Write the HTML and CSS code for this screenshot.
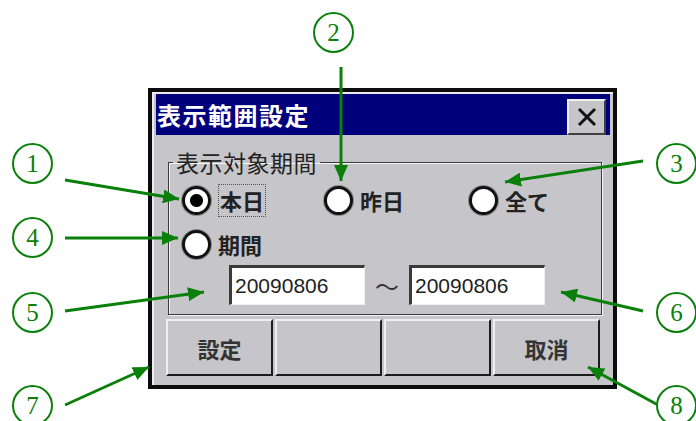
FILE: index.html
```html
<!DOCTYPE html>
<html lang="ja">
<head>
    <meta charset="UTF-8">
    <title>表示範囲設定</title>
    <link rel="stylesheet" href="styles.css">
</head>
<body>
    <div class="canvas">
        <div class="dialog">
            <div class="titlebar">
                <span class="title">表示範囲設定</span>
                <button class="close" aria-label="閉じる">
                    <svg width="20" height="20" viewBox="0 0 20 20"><path d="M2 2 L18 18 M18 2 L2 18" stroke="#111" stroke-width="3"/></svg>
                </button>
            </div>
            <div class="body">
                <fieldset class="group">
                    <legend>表示対象期間</legend>
                    <div class="row">
                        <label class="opt w1"><input type="radio" name="kikan" checked><span class="focus">本日</span></label>
                        <label class="opt w2"><input type="radio" name="kikan"><span>昨日</span></label>
                        <label class="opt"><input type="radio" name="kikan"><span>全て</span></label>
                    </div>
                    <div class="row row2">
                        <label class="opt"><input type="radio" name="kikan"><span>期間</span></label>
                    </div>
                    <div class="range">
                        <input type="text" value="20090806">
                        <span class="tilde">～</span>
                        <input type="text" value="20090806">
                    </div>
                </fieldset>
                <div class="buttons">
                    <button>設定</button>
                    <button></button>
                    <button></button>
                    <button>取消</button>
                </div>
            </div>
        </div>

        <svg class="arrows" width="696" height="421" viewBox="0 0 696 421">
            <defs>
                <marker id="head" markerWidth="16" markerHeight="14" refX="16" refY="7" orient="auto" markerUnits="userSpaceOnUse">
                    <path d="M0 0 L16 7 L0 14 Z" fill="#0a800a"/>
                </marker>
            </defs>
            <line x1="65" y1="180" x2="179" y2="199" marker-end="url(#head)"/>
            <line x1="341" y1="67" x2="341" y2="181" marker-end="url(#head)"/>
            <line x1="643" y1="161" x2="505" y2="182" marker-end="url(#head)"/>
            <line x1="65" y1="238" x2="178" y2="238" marker-end="url(#head)"/>
            <line x1="65" y1="311" x2="204" y2="292" marker-end="url(#head)"/>
            <line x1="643" y1="311" x2="561" y2="292" marker-end="url(#head)"/>
            <line x1="65" y1="405" x2="149" y2="367" marker-end="url(#head)"/>
            <line x1="658" y1="405" x2="588" y2="367" marker-end="url(#head)"/>
        </svg>

        <div class="callout c1">1</div>
        <div class="callout c2">2</div>
        <div class="callout c3">3</div>
        <div class="callout c4">4</div>
        <div class="callout c5">5</div>
        <div class="callout c6">6</div>
        <div class="callout c7">7</div>
        <div class="callout c8">8</div>
    </div>
</body>
</html>
```

FILE: styles.css
```css
body {
    margin: 0;
    padding: 0;
    background: #fff;
    font-family: "Noto Sans CJK JP", sans-serif;
}
.canvas {
    position: relative;
    width: 696px;
    height: 421px;
    overflow: hidden;
    padding-top: 88px;
    box-sizing: border-box;
}

/* dialog */
.dialog {
    margin-left: 148px;
    width: 469px;
    height: 301px;
    box-sizing: border-box;
    border: 4px solid #0c0c0c;
    background: #c6c5ca;
    padding: 2px 3px 3px 4px;
    box-shadow: inset 2px 2px 0 #ececec;
    display: flex;
    flex-direction: column;
}
.titlebar {
    height: 41px;
    background: #00007c;
    display: flex;
    align-items: center;
    justify-content: space-between;
    padding: 0 4px 0 1px;
}
.title {
    color: #fff;
    font-size: 24px;
    font-weight: bold;
    letter-spacing: 1.5px;
    line-height: 1;
}
.close {
    width: 39px;
    height: 36px;
    margin-top: 5px;
    padding: 0;
    background: #c6c5ca;
    border: 2px solid;
    border-color: #f0f0f0 #404040 #404040 #f0f0f0;
    display: flex;
    align-items: center;
    justify-content: center;
}

.body {
    display: flex;
    flex-direction: column;
}
.group {
    margin: 14px 8px 0 12px;
    padding: 10px 0 9px 0;
    border: 1px solid #3a3a3a;
    box-shadow: inset 1px 1px 0 #f4f4f4, 1px 1px 0 #f4f4f4;
    min-width: 0;
}
.group legend {
    margin-left: 4px;
    padding: 0 3px;
    font-size: 23px;
    line-height: 26px;
    letter-spacing: 0.5px;
    color: #222;
}
.row {
    display: flex;
    align-items: center;
    height: 30px;
    padding-left: 13px;
}
.row2 {
    margin-top: 14px;
}
.opt {
    display: flex;
    align-items: center;
    gap: 7px;
    font-size: 22px;
    font-weight: bold;
    color: #222;
}
.w1 { width: 142px; }
.w2 { width: 145px; }
.opt input {
    appearance: none;
    width: 29px;
    height: 29px;
    margin: 0;
    box-sizing: border-box;
    border: 3px solid #111;
    border-radius: 50%;
    background: #fff;
    box-shadow: 0 0 0 1px #8a8a8a;
}
.opt input:checked {
    background: radial-gradient(circle, #000 0 6px, #fff 7px);
}
.focus {
    border: 1px dotted #555;
    padding: 0 1px;
    line-height: 31px;
}

.range {
    display: flex;
    align-items: center;
    margin-top: 6px;
    padding-left: 60px;
}
.range input {
    width: 136px;
    height: 40px;
    box-sizing: border-box;
    margin: 0;
    padding: 0 0 0 3px;
    border: 2px solid;
    border-width: 3px 1px 1px 3px;
    border-color: #3a3a3a #efefef #efefef #3a3a3a;
    background: #fff;
    font-family: "Liberation Sans", Arial, sans-serif;
    font-size: 21px;
    color: #222;
}
.tilde {
    width: 44px;
    text-align: center;
    font-size: 24px;
    color: #333;
}

.buttons {
    display: flex;
    gap: 2px;
    margin: 4px 0 0 10px;
}
.buttons button {
    width: 107px;
    height: 57px;
    box-sizing: border-box;
    padding: 0;
    background: #c6c5ca;
    border: 2px solid;
    border-color: #efefef #1c1c1c #1c1c1c #efefef;
    font-family: "Noto Sans CJK JP", sans-serif;
    font-size: 22px;
    font-weight: bold;
    color: #333;
}

/* annotations */
.arrows {
    position: absolute;
    left: 0;
    top: 0;
    pointer-events: none;
}
.arrows line {
    stroke: #0a800a;
    stroke-width: 3;
}
.callout {
    position: absolute;
    width: 41px;
    height: 41px;
    box-sizing: border-box;
    border: 2px solid #0a800a;
    border-radius: 50%;
    display: flex;
    align-items: center;
    justify-content: center;
    font-family: "Liberation Serif", "Times New Roman", serif;
    font-size: 25px;
    color: #0a800a;
    background: #fff;
}
.c1 { left: 12px; top: 143px; }
.c2 { left: 313px; top: 12px; }
.c3 { left: 656px; top: 143px; }
.c4 { left: 12px; top: 217px; }
.c5 { left: 12px; top: 292px; }
.c6 { left: 656px; top: 292px; }
.c7 { left: 12px; top: 385px; }
.c8 { left: 656px; top: 385px; }
```
